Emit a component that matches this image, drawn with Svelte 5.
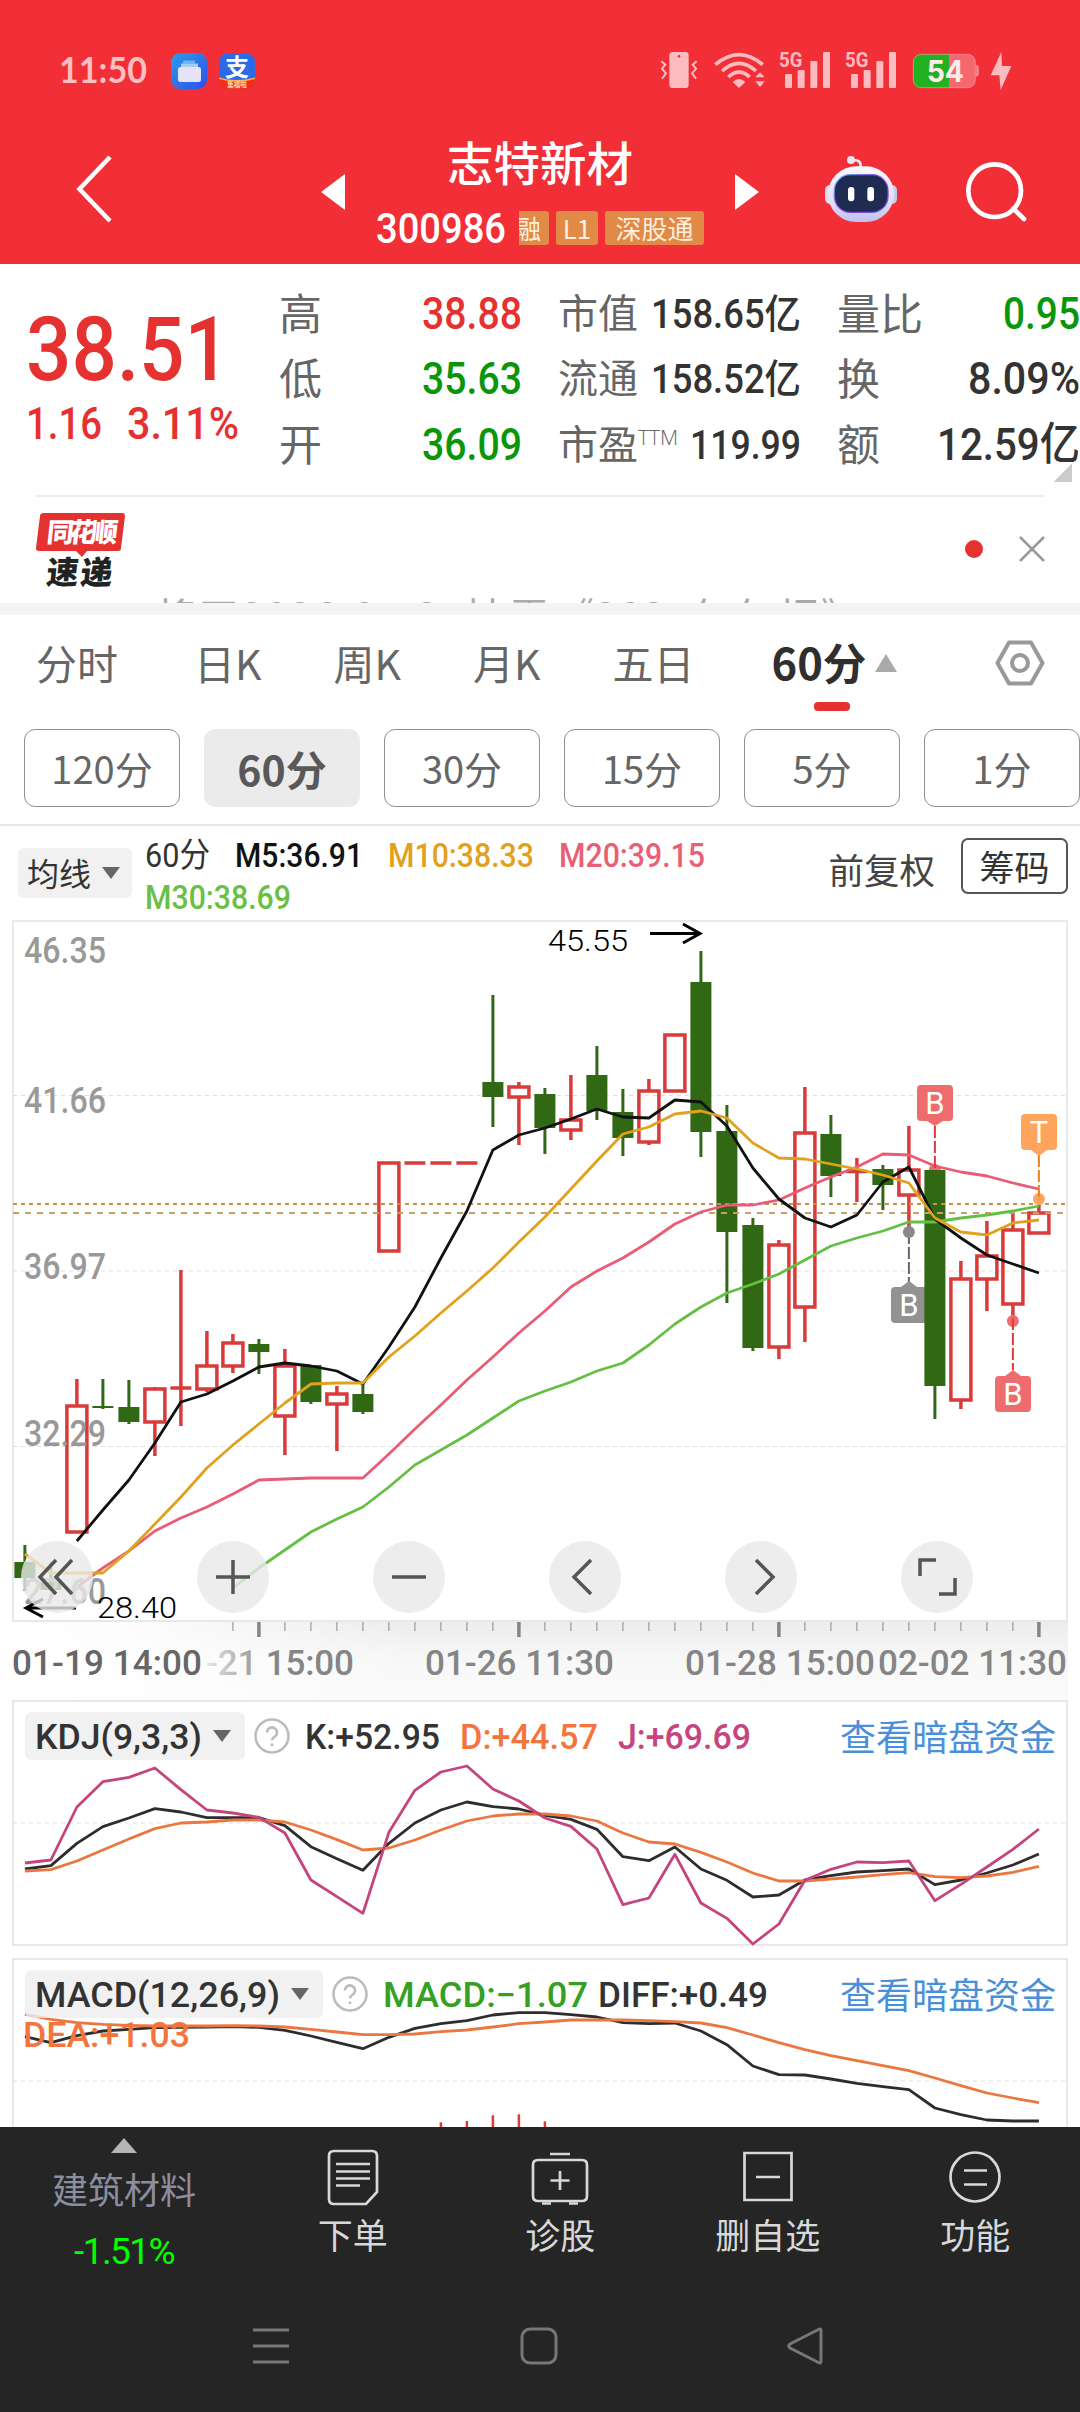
<script lang="ts">
	type Candle = [high: number, top: number, bottom: number, low: number, up: number];

	const columns = [
		[
			{ label: '高', value: '38.88', width: 100, tone: 'up' },
			{ label: '低', value: '35.63', width: 100, tone: 'down' },
			{ label: '开', value: '36.09', width: 100, tone: 'down' }
		],
		[
			{ label: '市值', value: '158.65亿', width: 150, tone: 'dark' },
			{ label: '流通', value: '158.52亿', width: 150, tone: 'dark' },
			{ label: '市盈', sup: 'TTM', value: '119.99', width: 111, tone: 'dark' }
		],
		[
			{ label: '量比', value: '0.95', width: 77, tone: 'down' },
			{ label: '换', value: '8.09%', width: 112, tone: 'dark' },
			{ label: '额', value: '12.59亿', width: 143, tone: 'dark' }
		]
	];

	const tabs = ['分时', '日K', '周K', '月K', '五日'];
	const periods = ['120分', '60分', '30分', '15分', '5分', '1分'];

	// pixel rows inside the price panel: high, body top, body bottom, low, 1 = rising
	const candles: Candle[] = [
		[1545, 1562, 1578, 1591, 0], [1562, 1582, 1590, 1591, 0], [1379, 1406, 1532, 1532, 1],
		[1379, 1406, 1408, 1409, 0], [1380, 1407, 1422, 1424, 0], [1387, 1389, 1422, 1456, 1],
		[1270, 1387, 1389, 1426, 1], [1331, 1366, 1389, 1392, 1], [1334, 1343, 1366, 1373, 1],
		[1339, 1344, 1352, 1374, 0], [1349, 1366, 1416, 1455, 1], [1365, 1365, 1402, 1404, 0],
		[1386, 1394, 1404, 1451, 1], [1383, 1394, 1412, 1414, 0], [1163, 1163, 1251, 1251, 1],
		[1163, 1163, 1163, 1163, 1], [1163, 1163, 1163, 1163, 1], [1163, 1163, 1163, 1163, 1],
		[995, 1082, 1097, 1127, 0], [1082, 1087, 1097, 1145, 1], [1088, 1094, 1128, 1154, 0],
		[1075, 1120, 1130, 1140, 1], [1046, 1075, 1111, 1120, 0], [1089, 1112, 1138, 1156, 0],
		[1079, 1091, 1142, 1145, 1], [1035, 1035, 1091, 1091, 1], [951, 982, 1132, 1157, 0],
		[1105, 1131, 1232, 1303, 0], [1218, 1225, 1348, 1351, 0], [1240, 1245, 1347, 1359, 1],
		[1087, 1133, 1307, 1342, 1], [1115, 1134, 1176, 1197, 0], [1158, 1171, 1172, 1202, 1],
		[1165, 1169, 1185, 1210, 0], [1126, 1170, 1195, 1232, 1], [1170, 1170, 1386, 1419, 0],
		[1261, 1279, 1400, 1409, 1], [1221, 1256, 1279, 1311, 1], [1212, 1230, 1304, 1320, 1],
		[1199, 1213, 1233, 1233, 1]
	];

	const averages = [
		{ color: '#66bf45', start: 8, data: [1588, 1568, 1550, 1532, 1519, 1507, 1487, 1465, 1450, 1435, 1418, 1401, 1391, 1382, 1371, 1363, 1345, 1324, 1307, 1293, 1284, 1274, 1260, 1246, 1238, 1231, 1222, 1222, 1218, 1215, 1211, 1206] },
		{ color: '#e95c75', start: 2, data: [1587, 1568, 1551, 1531, 1518, 1507, 1494, 1480, 1479, 1478, 1478, 1478, 1454, 1429, 1405, 1380, 1357, 1333, 1311, 1287, 1271, 1258, 1242, 1224, 1212, 1205, 1205, 1200, 1188, 1177, 1167, 1154, 1155, 1166, 1172, 1176, 1183, 1189] },
		{ color: '#111', start: 2, data: [1541, 1510, 1480, 1443, 1402, 1394, 1381, 1367, 1363, 1366, 1371, 1384, 1347, 1307, 1258, 1211, 1150, 1135, 1128, 1119, 1109, 1117, 1118, 1100, 1102, 1126, 1168, 1199, 1218, 1227, 1215, 1182, 1167, 1219, 1238, 1255, 1264, 1273] },
		{ color: '#e1a11c', start: 0, data: [1554, 1573, 1573, 1573, 1551, 1524, 1497, 1468, 1445, 1424, 1403, 1384, 1383, 1383, 1357, 1336, 1313, 1291, 1268, 1242, 1217, 1189, 1161, 1134, 1127, 1114, 1111, 1118, 1143, 1158, 1159, 1164, 1169, 1175, 1183, 1218, 1232, 1235, 1223, 1220] }
	];

	const priceLabels = [['46.35', 963], ['41.66', 1113], ['36.97', 1279], ['32.29', 1446], ['27.60', 1604]];

	// indicator series, thirds of a pixel below y = 1690
	const kdj = [
		{ color: '#2d2d2d', data: [537, 527, 460, 410, 384, 356, 366, 383, 383, 383, 407, 470, 506, 541, 460, 399, 360, 336, 350, 357, 376, 388, 418, 500, 512, 471, 537, 571, 621, 615, 570, 557, 546, 542, 537, 584, 570, 549, 525, 492] },
		{ color: '#ea7740', data: [543, 539, 513, 480, 447, 416, 399, 396, 390, 390, 396, 420, 449, 480, 474, 450, 420, 393, 378, 372, 372, 378, 393, 429, 456, 462, 487, 516, 549, 573, 573, 567, 561, 554, 548, 560, 563, 558, 547, 529] },
		{ color: '#c4457e', data: [519, 510, 351, 275, 262, 234, 299, 360, 369, 382, 429, 570, 620, 670, 427, 301, 246, 228, 297, 333, 384, 409, 477, 644, 624, 493, 639, 685, 762, 702, 571, 538, 516, 518, 513, 632, 583, 531, 478, 417] }
	];
	const macd = [
		{ color: '#2d2d2d', data: [1040, 1058, 1037, 1023, 1018, 1013, 1012, 1011, 1010, 1012, 1021, 1038, 1057, 1076, 1042, 1015, 1001, 992, 975, 968, 968, 974, 981, 998, 1001, 999, 1023, 1064, 1128, 1154, 1155, 1167, 1180, 1190, 1199, 1254, 1274, 1290, 1293, 1293] },
		{ color: '#ea7740', data: [973, 988, 998, 1003, 1006, 1008, 1008, 1008, 1007, 1008, 1011, 1018, 1026, 1034, 1034, 1032, 1025, 1020, 1011, 1001, 996, 990, 990, 990, 992, 995, 999, 1013, 1035, 1058, 1079, 1097, 1112, 1127, 1142, 1164, 1187, 1209, 1224, 1238] }
	];
	const macdBars = [1297, 1293, 1276, 1273, 1294];

	function x(i: number): number {
		return 24.9 + 26 * i;
	}

	function line(data: number[], start = 0): string {
		return data.map((y, i) => `${x(i + start)},${y}`).join(' ');
	}

	function indicatorLine(data: number[]): string {
		return line(data.map((v) => 1690 + v / 3));
	}
</script>

<!-- numerals squeezed to a fixed width; the box is exactly the cap height -->
{#snippet fit(value: string, width: number, cap: number, tone = '')}
	<svg class="fit {tone}" {width} height={cap} viewBox="0 0 {width} {cap}">
		<text x="0" y={cap} font-size={cap / 0.711} textLength={width} lengthAdjust="spacingAndGlyphs">{value}</text>
	</svg>
{/snippet}

{#snippet help()}
	<svg class="help" width="36" height="36" viewBox="0 0 36 36">
		<circle cx="18" cy="18" r="16.5" />
		<path d="M13 14.5a5 5 0 1 1 7.6 4.2c-1.8 1.1-2.6 1.9-2.6 3.6M18 25.5v2.5" />
	</svg>
{/snippet}

<div class="app">
	<header>
		<div class="status">
			<svg width="88" height="26" viewBox="0 0 88 26" class="clock"><text y="26" font-size="36" textLength="88" lengthAdjust="spacingAndGlyphs">11:50</text></svg>
			<svg class="app-icon" width="36" height="36" viewBox="0 0 36 36">
				<defs>
					<linearGradient id="wallet" x1="0" y1="0" x2="1" y2="1"><stop offset="0" stop-color="#2f9be6" /><stop offset="1" stop-color="#2a50ee" /></linearGradient>
				</defs>
				<rect width="36" height="36" rx="9" fill="url(#wallet)" />
				<path d="M12 7.500h12v3H12z" fill="#6db3f0" /><path d="M10 10.500h17v4H10z" fill="#a8cdf5" />
				<rect x="7" y="14" width="23" height="15" rx="2.500" fill="#e6e3f6" />
			</svg>
			<svg class="app-icon" width="36" height="36" viewBox="0 0 36 36">
				<defs><clipPath id="round"><rect width="36" height="36" rx="9" /></clipPath></defs>
				<g clip-path="url(#round)">
					<rect width="36" height="36" fill="#2d6be6" />
					<text x="18" y="22.500" text-anchor="middle" font-size="24" font-weight="700" fill="#fff">支</text>
					<path d="M0 25q18 5 36 0v11H0z" fill="#fb2a12" />
					<path d="M0 24.500q18 5 36 0v1.500q-18 5-36 0z" fill="#ffb04a" />
					<text x="18" y="34" text-anchor="middle" font-size="6.500" font-weight="700" fill="#ffe3b0">集福啦</text>
				</g>
			</svg>
			<svg class="signals" width="390" height="60" viewBox="0 0 1170 180">
				<g fill="none" stroke="#fbbcc0" stroke-width="6">
					<path d="M64 64l12 10-10 12 12 14-12 16M170 64l-12 10 10 12-12 14 12 16" />
					<g stroke-width="11">
						<path d="M226 74q71-60 142 0M246 93q51-46 102 0M265 111q32-29 64 0" />
					</g>
				</g>
				<g fill="#fbbcc0">
					<rect x="88" y="36" width="58" height="108" rx="10" />
					<path d="M278 126q19-18 38 0l-19 18zM346 112l14-15 14 15zM346 124h28l-14 17z" />
					<rect x="435" y="102" width="21" height="42" rx="3" /><rect x="473" y="90" width="21" height="54" rx="3" />
					<rect x="511" y="63" width="21" height="81" rx="3" /><rect x="549" y="36" width="21" height="108" rx="3" />
					<rect x="633" y="102" width="21" height="42" rx="3" /><rect x="671" y="90" width="21" height="54" rx="3" />
					<rect x="709" y="63" width="21" height="81" rx="3" /><rect x="747" y="36" width="21" height="108" rx="3" />
					<text class="net" x="417" y="81" font-size="62" textLength="70" lengthAdjust="spacingAndGlyphs">5G</text>
					<text class="net" x="615" y="81" font-size="62" textLength="70" lengthAdjust="spacingAndGlyphs">5G</text>
					<path d="M1084 36l-32 70h26l4 44 32-72h-28z" />
				</g>
				<circle cx="117" cy="49" r="4" fill="#f22f37" />
				<path d="M1006 74q11 0 11 10v18q0 8-11 8z" fill="#f67f85" />
				<rect x="820" y="43" width="186" height="100" rx="23" fill="#f5686f" />
				<path d="M927 43h-84q-23 0-23 23v54q0 23 23 23h84z" fill="#22b122" />
				<rect x="820" y="43" width="186" height="100" rx="23" fill="none" stroke="#f99ea2" stroke-opacity=".6" stroke-width="3" />
				<text class="battery" x="860" y="127" font-size="90" textLength="112" lengthAdjust="spacingAndGlyphs">54</text>
			</svg>
		</div>
		<div class="titlebar">
			<svg class="back" width="40" height="70" viewBox="0 0 40 70"><path d="M35 3L4.500 35 35 67" /></svg>
			<svg class="prev" width="24" height="36" viewBox="0 0 24 36"><path d="M24 0v36L0 18z" /></svg>
			<div class="stock">
				<h1>志特新材</h1>
				<div class="code">
					{@render fit('300986', 130, 30)}
					<div class="badges">
						<span class="badge cut">融</span>
						<span class="badge l1">L1</span>
						<span class="badge link">深股通</span>
					</div>
				</div>
			</div>
			<svg class="next" width="24" height="36" viewBox="0 0 24 36"><path d="M0 0v36l24-18z" /></svg>
			<svg class="tools" width="250" height="100" viewBox="0 0 750 300">
				<defs>
					<linearGradient id="shell" x1="0" y1="0" x2="0" y2="1"><stop offset="0" stop-color="#fbf8ff" /><stop offset=".65" stop-color="#e2def5" /><stop offset="1" stop-color="#bfc0ef" /></linearGradient>
					<linearGradient id="rim" x1="0" y1="0" x2="1" y2="1"><stop offset="0" stop-color="#58bdec" /><stop offset=".5" stop-color="#8a3fe0" /><stop offset="1" stop-color="#6a55e8" /></linearGradient>
				</defs>
				<path d="M156 62q28-6 26 20" fill="none" stroke="#f3e6f3" stroke-width="8" />
				<circle cx="153" cy="60" r="12" fill="#eee4f3" />
				<rect x="75" y="134" width="40" height="58" rx="16" fill="#d9dbf3" />
				<rect x="251" y="134" width="40" height="58" rx="16" fill="#c9c9f3" />
				<rect x="84" y="79" width="198" height="167" rx="84" fill="url(#shell)" />
				<rect x="101" y="102" width="165" height="117" rx="50" fill="url(#rim)" />
				<rect x="105" y="106" width="157" height="109" rx="46" fill="#1f2b50" />
				<rect x="144" y="141" width="19" height="43" rx="9" fill="#fff" /><rect x="202" y="141" width="20" height="43" rx="9" fill="#fff" />
				<g fill="none" stroke="#fff" stroke-width="14"><circle cx="584" cy="152" r="79" /><path d="M640 206l32 31" stroke-linecap="round" /></g>
			</svg>
		</div>
	</header>

	<section class="quote">
		<div class="price">
			{@render fit('38.51', 204, 63, 'up')}
			<div class="change">
				{@render fit('1.16', 76, 32, 'up')}
				{@render fit('3.11%', 112, 32, 'up')}
			</div>
		</div>
		{#each columns as rows, c}
			<div class="stats" class:compact={c === 1}>
				{#each rows as row}
					<div class="stat">
						<span>{row.label}{#if row.sup}<small>{row.sup}</small>{/if}</span>
						{@render fit(row.value, row.width, c === 1 ? 28.5 : 32, row.tone)}
					</div>
				{/each}
			</div>
		{/each}
		<i class="corner"></i>
	</section>

	<section class="news">
		<svg class="express" width="90" height="74" viewBox="0 0 90 74">
			<path d="M8 0h78q3 0 3 3l-4 32q0 3-3 3H51l-5 6-6-6H3q-3 0-3-3L4 3q0-3 4-3z" />
			<text x="13" y="29" fill="#fff" textLength="71" font-size="27" transform="skewX(-6)">同花顺</text>
			<text x="17" y="71" fill="#222" textLength="66" font-size="32" transform="skewX(-6)">速递</text>
		</svg>
		<div class="headline">将于2026-04-25披露《2025年年报》</div>
		<i class="dot"></i>
		<svg class="close" width="26" height="26" viewBox="0 0 26 26"><path d="M1 1l24 24M25 1L1 25" /></svg>
	</section>

	<nav class="tabs">
		{#each tabs as tab}
			<span class="tab">{tab}</span>
		{/each}
		<span class="tab active">60分</span>
		<svg class="caret" width="22" height="18" viewBox="0 0 22 18"><path d="M11 0l11 18H0z" /></svg>
		<svg class="gear" width="50" height="46" viewBox="0 0 50 46"><path d="M14 2.500h22L47.500 23 36 43.500H14L2.500 23z" stroke-linejoin="round" /><circle cx="25" cy="23" r="8" /></svg>
	</nav>

	<div class="periods">
		{#each periods as period}
			<button class:selected={period === '60分'}>{period}</button>
		{/each}
	</div>

	<div class="legend">
		<div class="picker"><span>均线</span><i class="down-caret"></i></div>
		<div class="values">
			{@render fit('60分', 65, 24, 'regular')}
			{@render fit('M5:36.91', 128, 24, 'black')}
			{@render fit('M10:38.33', 146, 24, 'amber')}
			{@render fit('M20:39.15', 146, 24, 'pink')}
			{@render fit('M30:38.69', 146, 24, 'lime')}
		</div>
		<span class="adjust">前复权</span>
		<button class="chips">筹码</button>
	</div>

	<div class="chart">
		<svg width="1080" height="781" viewBox="0 920 1080 781">
			<defs>
				<linearGradient id="shade" x1="0" y1="0" x2="0" y2="1"><stop offset="0" stop-color="#ececec" /><stop offset=".5" stop-color="#f8f8f8" /><stop offset="1" stop-color="#fafafa" /></linearGradient>
				<linearGradient id="veil" x1="0" y1="0" x2="1" y2="0"><stop offset="0" stop-color="#fff" /><stop offset=".3" stop-color="#fff" stop-opacity=".85" /><stop offset="1" stop-color="#fff" stop-opacity="0" /></linearGradient>
				<linearGradient id="fade" gradientUnits="userSpaceOnUse" x1="200" y1="0" x2="270" y2="0"><stop offset="0" stop-color="#eee" /><stop offset="1" stop-color="#858585" /></linearGradient>
			</defs>
			<rect x="13" y="1622" width="1055" height="79" fill="url(#shade)" />
			<rect x="13" y="1622" width="400" height="79" fill="url(#veil)" />
			<rect x="13" y="921" width="1054" height="700" class="frame" />
			{#each [1095.5, 1271, 1446.5] as y}
				<path d="M13 {y}H1066" class="grid" />
			{/each}

			{#each candles as [high, top, bottom, low, up], i}
				{#if i === 35}
					<g class="marker">
						<path d="M{x(34)} 1232v50" stroke="#666" class="lead" />
						<circle cx={x(34)} cy="1232" r="6" fill="#888" />
						<path d="M891 1291q0-4 4-4h6l8-6 8 6h10v36h-32q-4 0-4-4z" fill="#929292" />
						<text x="909" y="1316">B</text>
						<circle cx={x(35)} cy="1170" r="6" fill="#ef6c6e" />
					</g>
				{/if}
				{#if up}
					<g class="rise">
						{#if high < top}<path d="M{x(i)} {high}V{top}" />{/if}
						{#if low > bottom}<path d="M{x(i)} {bottom}V{low}" />{/if}
						{#if bottom - top > 3}
							<rect x={x(i) - 10} y={top} width="20" height={bottom - top} />
						{:else}
							<path d="M{x(i) - 10.5} {(top + bottom) / 2}h21" />
						{/if}
					</g>
				{:else}
					<g class="fall">
						<path d="M{x(i)} {high}V{low}" />
						<rect x={x(i) - 10.5} y={top} width="21" height={bottom - top} />
					</g>
				{/if}
			{/each}

			<path d="M13 1204H1066" stroke="#c98f4a" stroke-width="2" stroke-dasharray="4 4" />
			<path d="M13 1213H1066" stroke="#c99d63" stroke-width="2" stroke-dasharray="6 6" />
			{#each averages as ma}
				<polyline points={line(ma.data, ma.start)} stroke={ma.color} class="curve" />
			{/each}

			<g class="marker">
				<path d="M{x(35)} 1126v42" stroke="#e03a40" class="lead" />
				<path d="M921 1085h28q4 0 4 4v28q0 4-4 4h-6l-8 5-8-5h-6q-4 0-4-4v-28q0-4 4-4z" fill="#ef6c6e" />
				<text x="935" y="1114">B</text>
				<circle cx={x(39)} cy="1199" r="6" fill="#ffa45c" />
				<path d="M{x(39)} 1155v44" stroke="#f08020" class="lead" />
				<path d="M1025 1114h28q4 0 4 4v28q0 4-4 4h-6l-8 6-8-6h-6q-4 0-4-4v-28q0-4 4-4z" fill="#ffa45c" />
				<text x="1039" y="1143">T</text>
				<circle cx={x(38)} cy="1321" r="6" fill="#ef6c6e" />
				<path d="M{x(38)} 1318v52" stroke="#e03a40" class="lead" />
				<path d="M999 1376h6l8-6 8 6h6q4 0 4 4v28q0 4-4 4h-28q-4 0-4-4v-28q0-4 4-4z" fill="#ef6c6e" />
				<text x="1013" y="1405">B</text>
			</g>

			<g class="ylabel">
				{#each priceLabels as [label, y]}
					<text x="24" {y} textLength="82" lengthAdjust="spacingAndGlyphs">{label}</text>
				{/each}
			</g>
			<g class="extreme">
				<text x="548" y="951" textLength="80" lengthAdjust="spacingAndGlyphs">45.55</text>
				<path d="M650 933.500h49M683 924l17 9.500-17 9.500" />
				<text x="97" y="1618" textLength="80" lengthAdjust="spacingAndGlyphs">28.40</text>
				<path d="M76 1608H26M43 1599l-17 9 17 9" />
			</g>

			{#each candles as _, i}
				{#if i >= 8}
					<path d="M{x(i)} 1622v{i % 10 === 9 ? 15 : 9}" stroke={i % 10 === 9 ? '#858585' : '#999'} stroke-width={i % 10 === 9 ? 3.5 : 1.2} />
				{/if}
			{/each}
			<g class="xlabel">
				<text x="12" y="1675" textLength="190" fill="#666">01-19 14:00</text>
				<text x="206" y="1675" textLength="148" fill="url(#fade)">-21 15:00</text>
				<text x="425" y="1675" textLength="189">01-26 11:30</text>
				<text x="685" y="1675" textLength="190">01-28 15:00</text>
				<text x="878" y="1675" textLength="189">02-02 11:30</text>
			</g>
		</svg>
		<div class="controls">
			<button><svg width="40" height="40" viewBox="0 0 40 40"><path d="M19 3L3 20l16 17M35 3L19 20l16 17" /></svg></button>
			<button><svg width="40" height="40" viewBox="0 0 40 40"><path d="M20 3v34M3 20h34" /></svg></button>
			<button><svg width="40" height="40" viewBox="0 0 40 40"><path d="M3 20h34" /></svg></button>
			<button><svg width="40" height="40" viewBox="0 0 40 40"><path d="M26 3L9 20l17 17" /></svg></button>
			<button><svg width="40" height="40" viewBox="0 0 40 40"><path d="M15 3l17 17-17 17" /></svg></button>
			<button><svg width="40" height="40" viewBox="0 0 40 40"><path d="M3 19V3h16M38 21v16H22" /></svg></button>
		</div>
	</div>

	<section class="panel kdj">
		<svg class="plot" width="1056" height="246" viewBox="12 1700 1056 246">
			<path d="M13 1823H1066" class="grid" />
			{#each kdj as s}
				<polyline points={indicatorLine(s.data)} stroke={s.color} class="curve" />
			{/each}
		</svg>
		<div class="panel-head">
			<div class="pill">{@render fit('KDJ(9,3,3)', 167, 25)}<i class="down-caret"></i></div>
			{@render help()}
			<div class="readings">
				{@render fit('K:+52.95', 135, 25)}
				{@render fit('D:+44.57', 138, 25, 'orange')}
				{@render fit('J:+69.69', 133, 25, 'magenta')}
			</div>
			<a href="#kdj">查看暗盘资金</a>
		</div>
	</section>

	<section class="panel macd">
		<svg class="plot" width="1056" height="169" viewBox="12 1958 1056 169">
			<path d="M13 2081H1066" class="grid" />
			{#each macdBars as top, i}
				<path d="M{x(16 + i)} {1690 + top / 3}V2130" stroke="#d93a3a" stroke-width="2.5" />
			{/each}
			{#each macd as s}
				<polyline points={indicatorLine(s.data)} stroke={s.color} class="curve" />
			{/each}
		</svg>
		<div class="panel-head">
			<div class="pill wide">{@render fit('MACD(12,26,9)', 245, 25)}<i class="down-caret"></i></div>
			{@render help()}
			<div class="readings tight">
				{@render fit('MACD:−1.07', 205, 25, 'green')}
				{@render fit('DIFF:+0.49', 170, 25)}
			</div>
			<a href="#macd">查看暗盘资金</a>
		</div>
		<div class="dea">{@render fit('DEA:+1.03', 167, 25, 'orange')}</div>
	</section>

	<footer>
		<div class="actions">
			<div class="sector">
				<svg width="26" height="15" viewBox="0 0 26 15"><path d="M13 0l13 15H0z" fill="#b5b5b5" /></svg>
				<span>建筑材料</span>
				<b>-1.51%</b>
			</div>
			<div class="action">
				<svg width="60" height="60" viewBox="0 0 60 60"><path d="M11 4h38q5 0 5 5v36L43 57H11q-5 0-5-5V9q0-5 5-5zM13 17h34M13 24.500h34M13 31.500h34M13 38.500h24" /></svg>
				<span>下单</span>
			</div>
			<div class="action">
				<svg width="60" height="60" viewBox="0 0 60 60"><path d="M20 7h20M8 13h44q5 0 5 5v31q0 5-5 5H8q-5 0-5-5V18q0-5 5-5zM30 24v19M20.500 33.500h19" /><path d="M12 56.500h9M39 56.500h9" stroke-width="4" /></svg>
				<span>诊股</span>
			</div>
			<div class="action">
				<svg width="60" height="60" viewBox="0 0 60 60"><path d="M6.500 6h47v47h-47zM18 30h24" /></svg>
				<span>删自选</span>
			</div>
			<div class="action">
				<svg width="60" height="60" viewBox="0 0 60 60"><circle cx="30" cy="30" r="24.500" /><path d="M19 23.500h23M19 37.500h23" /></svg>
				<span>功能</span>
			</div>
		</div>
		<div class="system">
			<svg width="40" height="40" viewBox="0 0 40 40"><path d="M2 4h36M2 20h36M2 36h36" /></svg>
			<svg width="40" height="40" viewBox="0 0 40 40"><rect x="3" y="3" width="34" height="34" rx="8" /></svg>
			<svg width="40" height="40" viewBox="0 0 40 40"><path d="M34 4.500v31q0 2.500-2.500 1L3 22q-2.500-2 0-4L31.500 3.500q2.500-1.500 2.500 1z" /></svg>
		</div>
	</footer>
</div>

<style>
	:global(body) {
		margin: 0;
		background: #fff;
	}

	.app {
		width: 1080px;
		height: 2412px;
		overflow: hidden;
		display: flex;
		flex-direction: column;
		background: #fff;
		color: #333;
		font-family: 'Noto Sans CJK SC', sans-serif;
	}

	.app > * {
		flex-shrink: 0;
		box-sizing: border-box;
	}

	svg {
		display: block;
		flex-shrink: 0;
	}

	button {
		font: inherit;
		color: inherit;
		padding: 0;
		box-sizing: border-box;
		background: none;
		border: none;
	}

	.fit {
		overflow: visible;
		fill: #333;
		font-family: Roboto, 'Noto Sans CJK SC', sans-serif;
		font-weight: 500;
	}

	.fit.up { fill: #e63131; }
	.fit.down { fill: #0a960a; }
	.fit.regular { font-weight: 400; }
	.fit.black { fill: #111; }
	.fit.amber { fill: #e1a11c; }
	.fit.pink { fill: #ea5f76; }
	.fit.lime { fill: #69c043; }
	.fit.orange { fill: #f5733c; }
	.fit.magenta { fill: #c9447f; }
	.fit.green { fill: #35a024; }

	/* header */
	header {
		height: 264px;
		padding-top: 40px;
		background: #f22f37;
	}

	.status {
		display: flex;
		align-items: center;
		height: 60px;
		padding-left: 59px;
	}

	.clock {
		overflow: visible;
		fill: #fbbfc2;
		font-family: Lato, sans-serif;
		font-weight: 700;
		margin-right: 12px;
	}

	.app-icon {
		margin: 2px 0 0 12px;
	}

	.signals {
		margin-left: auto;
		margin-right: 50px;
	}

	.net {
		font-family: Roboto, sans-serif;
		font-weight: 700;
	}

	.battery {
		font-family: Inter, sans-serif;
		font-weight: 700;
		fill: #fdecec;
	}

	.titlebar {
		display: flex;
		align-items: flex-start;
		height: 164px;
	}

	.back {
		margin: 54px 206px 0 75px;
		fill: none;
		stroke: #fff;
		stroke-width: 4.5;
	}

	.prev,
	.next {
		margin-top: 74px;
		fill: #fff;
	}

	.stock {
		width: 390px;
		display: flex;
		flex-direction: column;
		align-items: center;
	}

	h1 {
		margin: 33px 0 0;
		font-size: 46.500px;
		line-height: 56px;
		font-weight: 500;
		color: #fff;
	}

	.code {
		display: flex;
		align-items: center;
		height: 34px;
		margin-top: 22px;
	}

	.code .fit {
		fill: #fff;
	}

	.badges {
		display: flex;
		gap: 7px;
		margin-left: 13px;
	}

	.badge {
		height: 34px;
		line-height: 33px;
		border-radius: 3px;
		background: #e18a47;
		color: #fdeedd;
		font-size: 26px;
		text-align: center;
		overflow: hidden;
	}

	.cut {
		width: 30px;
		display: flex;
		border-radius: 0 3px 3px 0;
		text-indent: -4px;
	}

	.l1 { width: 42px; }
	.link { width: 99px; }

	.tools {
		margin: 40px 0 0 41px;
	}

	/* quote */
	.quote {
		position: relative;
		display: flex;
		height: 231px;
		padding: 16px 0 0 26px;
	}

	.price {
		width: 253px;
		padding-top: 37px;
	}

	.change {
		display: flex;
		gap: 25px;
		margin-top: 27px;
	}

	.stats {
		width: 243px;
		margin-right: 36px;
	}

	.stats:last-of-type {
		width: 243px;
		margin-right: 0;
	}

	.stats.compact {
		width: 243px;
		margin-right: 36px;
	}

	.stat {
		display: flex;
		align-items: center;
		justify-content: space-between;
		height: 65.500px;
		font-size: 43px;
		color: #666;
		white-space: nowrap;
	}

	.stat > span {
		margin-top: -4px;
	}

	.compact .stat {
		font-size: 40px;
	}

	small {
		font-family: 'Open Sans', sans-serif;
		font-weight: 300;
		font-size: 21px;
		vertical-align: 14px;
		line-height: 0;
	}

	.corner {
		position: absolute;
		left: 1054px;
		top: 200px;
		width: 18px;
		height: 18px;
		background: linear-gradient(135deg, transparent 50%, #ccc 50%);
	}

	/* news */
	.news {
		display: flex;
		height: 120px;
		padding-right: 35px;
		overflow: hidden;
		border-bottom: 12px solid #f4f4f4;
		background: linear-gradient(#ededed, #ededed) 36px 0 / 1008px 2px no-repeat;
	}

	.express {
		margin: 18px 0 0 36px;
		fill: #e63131;
		font-weight: 900;
	}

	.headline {
		margin: 96px 0 0 28px;
		width: 720px;
		font-size: 43px;
		line-height: 50px;
		letter-spacing: 0.3px;
		color: #aaa;
		white-space: nowrap;
	}

	.dot {
		width: 18px;
		height: 18px;
		margin: 45px 36px 0 auto;
		border-radius: 50%;
		background: #e63131;
	}

	.close {
		margin-top: 41px;
		stroke: #999;
		stroke-width: 2.5;
	}

	/* tabs */
	.tabs {
		display: flex;
		height: 114px;
		padding: 0 35px 0 36px;
		align-items: flex-start;
		font-size: 41px;
		line-height: 94px;
		color: #666;
	}

	.tab {
		white-space: nowrap;
		margin-right: 76px;
	}

	.tab:nth-child(2),
	.tab:nth-child(3),
	.tab:nth-child(4) {
		margin-right: 72px;
	}

	.tab:nth-child(5) {
		margin-right: 77px;
	}

	.tab.active {
		position: relative;
		height: 96px;
		margin-right: 9px;
		font-size: 43.500px;
		font-weight: 700;
		color: #2f2f2f;
	}

	.tab.active::after {
		content: '';
		position: absolute;
		left: 42px;
		bottom: 0;
		width: 36px;
		height: 9px;
		border-radius: 4px;
		background: #e63131;
	}

	.caret {
		margin-top: 39px;
		fill: #aaa;
	}

	.gear {
		margin: 25px 0 0 auto;
		fill: none;
		stroke: #999;
		stroke-width: 4;
	}

	.periods {
		display: flex;
		gap: 24px;
		height: 97px;
		padding-left: 24px;
		border-bottom: 2px solid #e6e6e6;
	}

	.periods button {
		width: 156px;
		height: 78px;
		flex-shrink: 0;
		border: 1.5px solid #8f8f8f;
		border-radius: 11px;
		font-size: 38px;
		line-height: 72px;
		color: #666;
	}

	.periods .selected {
		border-color: #ebebeb;
		background: #ebebeb;
		font-size: 41px;
		font-weight: 700;
		color: #595959;
	}

	/* moving average legend */
	.legend {
		display: flex;
		align-items: flex-start;
		height: 94px;
		padding: 12px 12px 0 18px;
	}

	.picker {
		display: flex;
		align-items: center;
		gap: 11px;
		width: 114px;
		height: 50px;
		margin: 10px 13px 0 0;
		padding-left: 9px;
		box-sizing: border-box;
		border-radius: 6px;
		background: #f1f1f1;
		font-size: 32px;
		white-space: nowrap;
	}

	.picker span {
		margin-top: -3px;
	}

	.down-caret {
		width: 18px;
		height: 12px;
		flex-shrink: 0;
		background: #666;
		clip-path: polygon(0 0, 100% 0, 50% 100%);
	}

	.values {
		display: flex;
		flex-wrap: wrap;
		gap: 18px 25px;
		width: 600px;
		padding-top: 5px;
	}

	.adjust {
		margin: 6px 0 0 auto;
		font-size: 35.500px;
		line-height: 50px;
		color: #444;
	}

	.chips {
		width: 107px;
		height: 56px;
		margin-left: 26px;
		border: 2px solid #555;
		border-radius: 7px;
		font-size: 35px;
		line-height: 48px;
	}

	/* chart */
	.chart {
		position: relative;
		height: 780px;
	}

	.frame {
		fill: none;
		stroke: #e8e8e8;
		stroke-width: 2;
	}

	.grid {
		stroke: #ddd;
		stroke-width: 1.2;
		stroke-dasharray: 4 4;
	}

	.rise path,
	.rise rect {
		fill: none;
		stroke: #d93a3a;
		stroke-width: 3.5;
	}

	.fall path {
		stroke: #316814;
		stroke-width: 3;
	}

	.fall rect {
		fill: #316814;
	}

	.curve {
		fill: none;
		stroke-width: 2.8;
		stroke-linejoin: round;
	}

	.lead {
		stroke-width: 2;
		stroke-dasharray: 12 3;
	}

	.marker text {
		fill: #fff;
		font-family: Roboto, sans-serif;
		font-size: 31px;
		text-anchor: middle;
	}

	.ylabel {
		fill: #999;
		font-family: Roboto, sans-serif;
		font-size: 36px;
		font-weight: 500;
	}

	.extreme {
		fill: #000;
		font-family: Roboto, sans-serif;
		font-size: 30px;
		font-weight: 300;
	}

	.extreme path {
		fill: none;
		stroke: #000;
		stroke-width: 3;
	}

	.xlabel {
		fill: #858585;
		font-family: Roboto, sans-serif;
		font-size: 35px;
		font-weight: 500;
	}

	.controls {
		position: absolute;
		left: 21px;
		top: 621px;
		display: flex;
		gap: 104px;
	}

	.controls button {
		display: flex;
		align-items: center;
		justify-content: center;
		width: 72px;
		height: 72px;
		border-radius: 50%;
		background: rgba(232, 232, 232, 0.8);
	}

	.controls path {
		fill: none;
		stroke: #555;
		stroke-width: 3.5;
	}

	/* indicators */
	.panel {
		position: relative;
		width: 1056px;
		margin-left: 12px;
		border: 2px solid #e8e8e8;
	}

	.kdj {
		height: 246px;
		margin-bottom: 12px;
	}

	.macd {
		height: 169px;
		border-bottom: none;
	}

	.plot {
		position: absolute;
		left: -2px;
		top: -2px;
	}

	.panel-head {
		position: relative;
		display: flex;
		align-items: center;
		height: 48px;
		padding: 10px 10px 0 11px;
	}

	.pill {
		display: flex;
		align-items: center;
		gap: 11px;
		width: 220px;
		height: 48px;
		padding-left: 10px;
		box-sizing: border-box;
		border-radius: 6px;
		background: rgba(238, 238, 238, 0.8);
	}

	.pill.wide {
		width: 298px;
	}

	.help {
		margin: 0 15px 0 9px;
		fill: none;
		stroke: #bbb;
		stroke-width: 2.5;
	}

	.readings {
		display: flex;
		gap: 20px;
	}

	.readings.tight {
		gap: 10px;
	}

	a {
		margin: -3px 0 0 auto;
		font-size: 36px;
		color: #4a90d9;
		text-decoration: none;
	}

	.dea {
		position: relative;
		padding: 4px 0 0 9px;
	}

	/* bottom bars */
	footer {
		height: 285px;
		background: #252525;
	}

	.actions {
		display: flex;
		height: 180px;
	}

	.sector {
		display: flex;
		flex-direction: column;
		align-items: center;
		width: 248px;
		padding-top: 11px;
		box-sizing: border-box;
		font-size: 36px;
		line-height: 48px;
		color: #8d8da0;
	}

	.sector span {
		margin-top: 11px;
	}

	.sector b {
		margin-top: 16px;
		font-family: Roboto, sans-serif;
		font-size: 37px;
		font-weight: 400;
		letter-spacing: -1.6px;
		color: #0f0;
	}

	.action {
		display: flex;
		flex-direction: column;
		align-items: center;
		width: 207.500px;
		padding: 20px 0 0 2px;
		box-sizing: border-box;
		font-size: 35px;
		line-height: 48px;
		color: #d8d8d8;
	}

	.action span {
		margin-top: 3px;
	}

	.action path,
	.action circle {
		fill: none;
		stroke: #d8d8d8;
		stroke-width: 2.7;
	}

	.system {
		display: flex;
		gap: 228px;
		padding: 19px 0 0 251px;
	}

	.system svg {
		fill: none;
		stroke: #777;
		stroke-width: 3;
	}
</style>
